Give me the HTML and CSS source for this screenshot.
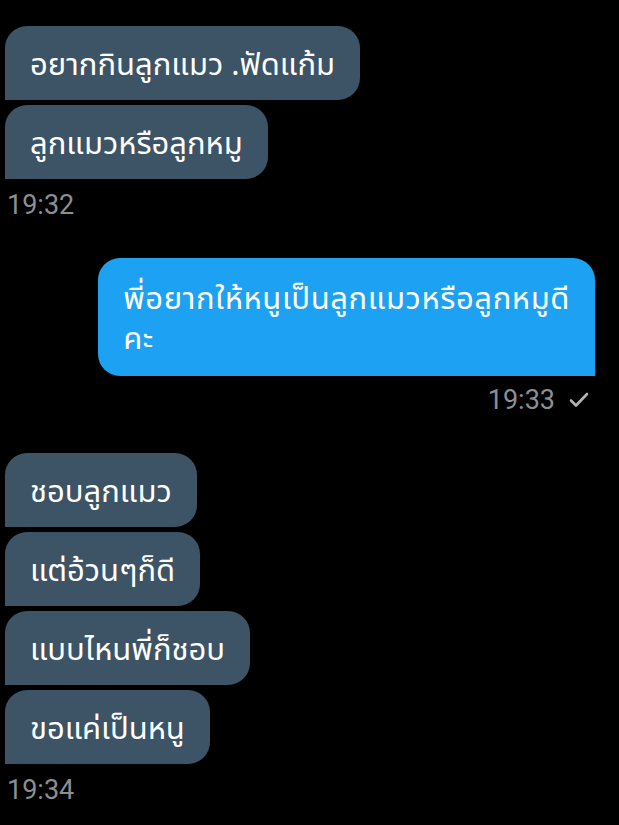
FILE: index.html
```html
<!DOCTYPE html>
<html lang="th">
<head>
<meta charset="utf-8">
<link rel="stylesheet" href="styles.css">
</head>
<body>
<div class="chat">
  <div class="group in">
    <div class="bubble">อยากกินลูกแมว .ฟัดแก้ม</div>
    <div class="bubble">ลูกแมวหรือลูกหมู</div>
    <div class="time">19:32</div>
  </div>
  <div class="group out">
    <div class="bubble blue">พี่อยากให้หนูเป็นลูกแมวหรือลูกหมูดี<br>คะ</div>
    <div class="time">19:33
      <svg class="check" viewBox="0 0 24 24" width="24" height="24"><path d="M4 12.5l5 5L20 6" fill="none" stroke="#b0b3b8" stroke-width="2.6" stroke-linecap="round" stroke-linejoin="round"/></svg>
    </div>
  </div>
  <div class="group in">
    <div class="bubble">ชอบลูกแมว</div>
    <div class="bubble">แต่อ้วนๆก็ดี</div>
    <div class="bubble">แบบไหนพี่ก็ชอบ</div>
    <div class="bubble">ขอแค่เป็นหนู</div>
    <div class="time">19:34</div>
  </div>
</div>
</body>
</html>
```
FILE: styles.css
```css
html, body {
  margin: 0;
  background: #000;
}
.chat {
  padding: 26px 24px 0 5px;
  font-family: "Noto Sans", "Noto Sans Thai", "Roboto", sans-serif;
  display: flex;
  flex-direction: column;
}
.group {
  display: flex;
  flex-direction: column;
  gap: 5px;
}
.group.in {
  align-items: flex-start;
}
.group.out {
  align-items: flex-end;
  margin-top: 38px;
  margin-bottom: 38px;
}
.bubble {
  background: #3d5366;
  color: #fff;
  font-size: 31px;
  line-height: 40px;
  padding: 17px 25px 17px 25px;
  border-radius: 22px 22px 22px 0;
}
.bubble.blue {
  background: #1da1f2;
  border-radius: 22px 22px 0 22px;
  padding: 19px 25px 19px 25px;
  letter-spacing: 0.6px;
}
.time {
  color: #8b8f94;
  font-family: "Roboto", sans-serif;
  font-size: 27px;
  line-height: 30px;
  margin-top: 6px;
  padding-left: 2px;
  display: flex;
  align-items: center;
  gap: 12px;
}
.out .time {
  margin-top: 4px;
  padding-right: 4px;
}
.check {
  display: block;
}
```
